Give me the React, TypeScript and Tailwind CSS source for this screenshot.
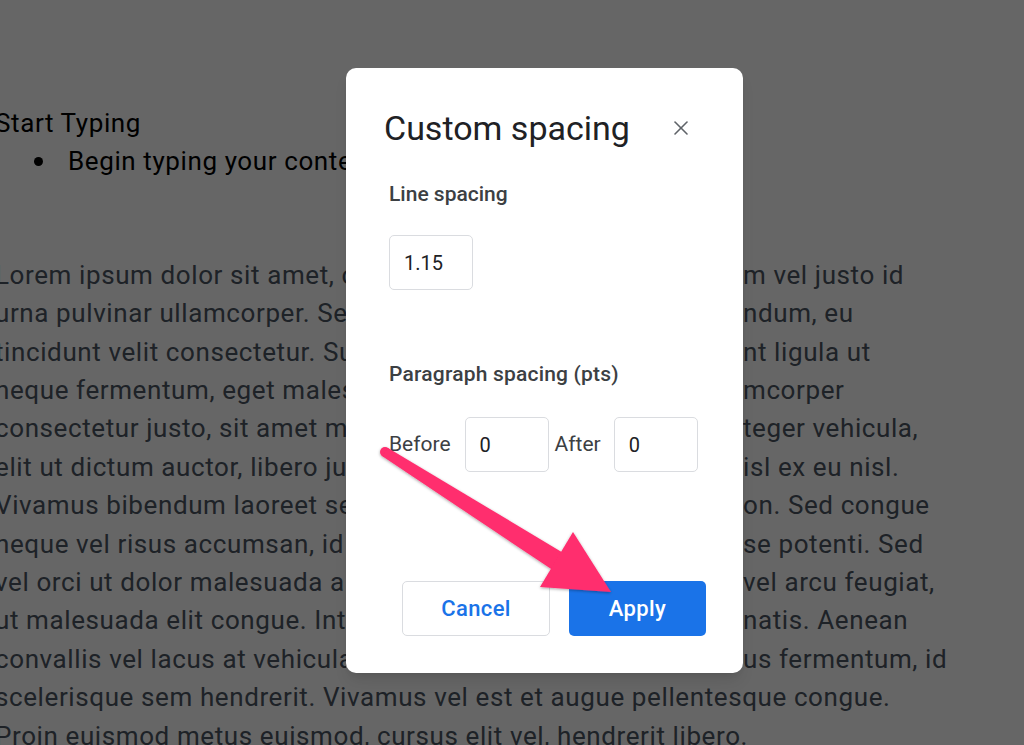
import {X} from 'lucide-react';

const lines: [string, string][] = [
    ['Lorem ipsum dolor sit amet, consectetur', 'm vel justo id'],
    ['urna pulvinar ullamcorper. Sed at magna', 'ndum, eu'],
    ['tincidunt velit consectetur. Suspendisse', 'nt ligula ut'],
    ['neque fermentum, eget malesuada erat', 'mcorper'],
    ['consectetur justo, sit amet mattis tortor', 'teger vehicula,'],
    ['elit ut dictum auctor, libero justo laoreet', 'isl ex eu nisl.'],
    ['Vivamus bibendum laoreet sem, eu tempor', 'on. Sed congue'],
    ['neque vel risus accumsan, id facilisis', 'se potenti. Sed'],
    ['vel orci ut dolor malesuada aliquet', 'vel arcu feugiat,'],
    ['ut malesuada elit congue. Integer tincidunt', 'natis. Aenean'],
    ['convallis vel lacus at vehicula. Aliquam', 'us fermentum, id'],
];

function SpacingInput({value}: {value: string}) {
    return (
        <div className="flex h-[55px] w-[84px] items-center rounded-[5px] border border-[#dadce0] pl-[14px] text-[20px] text-[#202124]">
            {value}
        </div>
    );
}

export default function App() {
    return (
        <div className="relative h-[745px] w-[1024px] overflow-hidden bg-white font-['Roboto',sans-serif]">
            {/* document behind the dialog */}
            <div className="ml-[-5px] pt-[104px] text-[26px] leading-[38.4px] tracking-[0.6px] text-[#4b5563]">
                <p className="text-black">Start Typing</p>
                <div className="flex w-[351px] items-center overflow-hidden whitespace-nowrap text-black">
                    <span className="ml-[39px] h-[9px] w-[9px] shrink-0 rounded-full bg-black" />
                    <span className="ml-[25px]">Begin typing your content here...</span>
                </div>
                <div className="mt-[75px]">
                    {lines.map(([left, right], i) => (
                        <div key={i} className="grid grid-cols-[351px_397px_1fr] whitespace-nowrap">
                            <span className="overflow-hidden">{left}</span>
                            <span />
                            <span>{right}</span>
                        </div>
                    ))}
                    <p className="whitespace-nowrap">
                        scelerisque sem hendrerit. Vivamus vel est et augue pellentesque congue.
                    </p>
                    <p className="whitespace-nowrap">
                        Proin euismod metus euismod, cursus elit vel, hendrerit libero.
                    </p>
                </div>
            </div>

            {/* overlay */}
            <div className="absolute inset-0 bg-black/60" />

            {/* dialog */}
            <div className="absolute left-[346px] top-[68px] flex h-[605px] w-[397px] flex-col rounded-[10px] bg-white pb-[37px] shadow-lg">
                <div className="flex items-center justify-between pl-[38px] pr-[50px] pt-[40px]">
                    <h2 className="text-[34px] leading-[40px] text-[#202124]">Custom spacing</h2>
                    <X className="h-[24px] w-[24px] text-[#5f6368]" strokeWidth={1.6} />
                </div>
                <div className="pl-[43px]">
                    <p className="mt-[34px] text-[21px] font-medium leading-[24px] text-[#3c4043]">
                        Line spacing
                    </p>
                    <div className="mt-[29px]">
                        <SpacingInput value="1.15" />
                    </div>
                    <p className="mt-[72px] text-[21px] font-medium leading-[24px] tracking-[0.2px] text-[#3c4043]">
                        Paragraph spacing (pts)
                    </p>
                    <div className="mt-[31px] flex items-center text-[21px] text-[#3c4043]">
                        <span className="mr-[14px]">Before</span>
                        <SpacingInput value="0" />
                        <span className="ml-[6px] mr-[13px]">After</span>
                        <SpacingInput value="0" />
                    </div>
                </div>
                <div className="mt-auto flex justify-end gap-[19px] pr-[37px]">
                    <button
                        type="button"
                        className="h-[55px] w-[148px] rounded-[5px] border border-[#dadce0] bg-white text-[22px] font-medium tracking-[0.4px] text-[#1a73e8]"
                    >
                        Cancel
                    </button>
                    <button
                        type="button"
                        className="h-[55px] w-[137px] rounded-[5px] bg-[#1a73e8] text-[22px] font-medium tracking-[0.4px] text-white"
                    >
                        Apply
                    </button>
                </div>
            </div>

            {/* annotation arrow */}
            <svg
                className="pointer-events-none absolute inset-0"
                width="1024"
                height="745"
                viewBox="0 0 1024 745"
            >
                <defs>
                    <filter id="arrowShadow" x="-10%" y="-10%" width="120%" height="120%">
                        <feDropShadow dx="0" dy="1" stdDeviation="1.5" floodColor="#000" floodOpacity="0.35" />
                    </filter>
                </defs>
                <g fill="#ff2d6e" filter="url(#arrowShadow)">
                    <circle cx="385" cy="452" r="5" />
                    <polygon points="382.4,456.2 387.6,447.8 563.3,552.9 552.7,570.1" />
                    <polygon points="573,532 540,587 611,592" />
                </g>
            </svg>
        </div>
    );
}
